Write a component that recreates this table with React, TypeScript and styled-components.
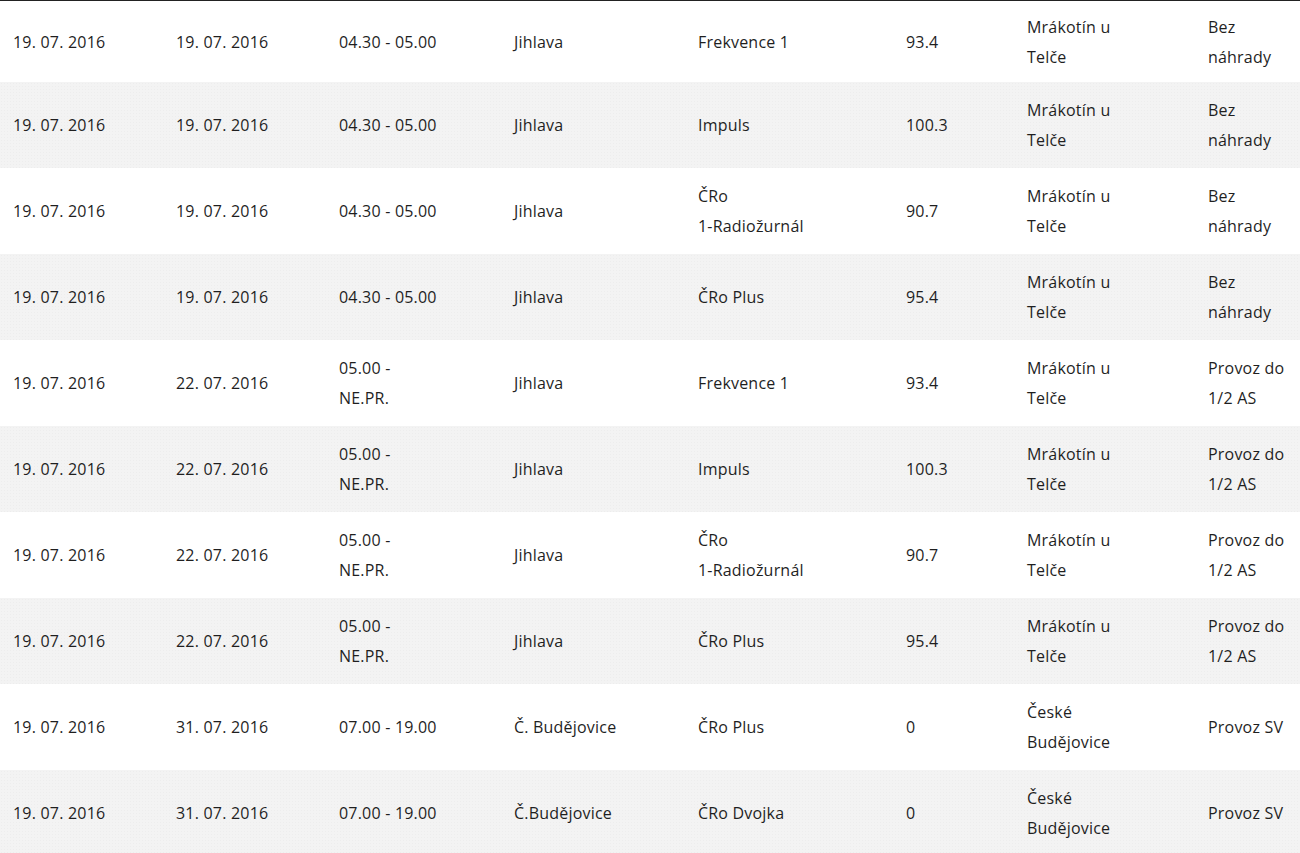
import styled, { createGlobalStyle } from 'styled-components'

const GlobalStyle = createGlobalStyle`
  html, body {
    margin: 0;
    padding: 0;
    background: #fff;
  }
  body {
    font-family: "Open Sans", "Liberation Sans", sans-serif;
    color: #1f1f1f;
    overflow: hidden;
  }
`

type Column = { width: number; text: number }

const columns: Column[] = [
  { width: 163, text: 140 },
  { width: 163, text: 140 },
  { width: 175, text: 101 },
  { width: 184, text: 160 },
  { width: 208, text: 135 },
  { width: 121, text: 100 },
  { width: 181, text: 112 },
  { width: 105, text: 90 }
]

const rows: string[][] = [
  ['19. 07. 2016', '19. 07. 2016', '04.30 - 05.00', 'Jihlava', 'Frekvence 1', '93.4', 'Mrákotín u Telče', 'Bez náhrady'],
  ['19. 07. 2016', '19. 07. 2016', '04.30 - 05.00', 'Jihlava', 'Impuls', '100.3', 'Mrákotín u Telče', 'Bez náhrady'],
  ['19. 07. 2016', '19. 07. 2016', '04.30 - 05.00', 'Jihlava', 'ČRo 1-Radiožurnál', '90.7', 'Mrákotín u Telče', 'Bez náhrady'],
  ['19. 07. 2016', '19. 07. 2016', '04.30 - 05.00', 'Jihlava', 'ČRo Plus', '95.4', 'Mrákotín u Telče', 'Bez náhrady'],
  ['19. 07. 2016', '22. 07. 2016', '05.00 - NE.PR.', 'Jihlava', 'Frekvence 1', '93.4', 'Mrákotín u Telče', 'Provoz do 1/2 AS'],
  ['19. 07. 2016', '22. 07. 2016', '05.00 - NE.PR.', 'Jihlava', 'Impuls', '100.3', 'Mrákotín u Telče', 'Provoz do 1/2 AS'],
  ['19. 07. 2016', '22. 07. 2016', '05.00 - NE.PR.', 'Jihlava', 'ČRo 1-Radiožurnál', '90.7', 'Mrákotín u Telče', 'Provoz do 1/2 AS'],
  ['19. 07. 2016', '22. 07. 2016', '05.00 - NE.PR.', 'Jihlava', 'ČRo Plus', '95.4', 'Mrákotín u Telče', 'Provoz do 1/2 AS'],
  ['19. 07. 2016', '31. 07. 2016', '07.00 - 19.00', 'Č. Budějovice', 'ČRo Plus', '0', 'České Budějovice', 'Provoz SV'],
  ['19. 07. 2016', '31. 07. 2016', '07.00 - 19.00', 'Č.Budějovice', 'ČRo Dvojka', '0', 'České Budějovice', 'Provoz SV']
]

// words only break at spaces, never at the hyphen in "1-Radiožurnál"
function Words ({ value }: { value: string }) {
  const parts = value.split(' ')
  return (
    <>
      {parts.map((w, i) => (
        <span key={i}>
          <Word>{w}</Word>
          {i < parts.length - 1 ? ' ' : null}
        </span>
      ))}
    </>
  )
}

export default function App () {
  return (
    <>
      <GlobalStyle />
      <Table>
        <colgroup>
          {columns.map((c, i) => (
            <col key={i} style={{ width: c.width }} />
          ))}
        </colgroup>
        <tbody>
          {rows.map((row, r) => (
            <Row key={r} $striped={r % 2 === 1}>
              {row.map((value, c) => (
                <Cell key={c}>
                  <CellText $max={columns[c].text}>
                    <Words value={value} />
                  </CellText>
                </Cell>
              ))}
            </Row>
          ))}
        </tbody>
      </Table>
    </>
  )
}

const Table = styled.table`
  width: 1300px;
  table-layout: fixed;
  border-collapse: collapse;
  border-top: 1px solid #222;
  box-shadow: inset 0 1px 0 #9a9a9a;
  font-size: 16px;
  letter-spacing: 0.2px;
  line-height: 30px;
`

const Row = styled.tr<{ $striped: boolean }>`
  background-color: ${(p) => (p.$striped ? '#f3f3f3' : '#fff')};
  background-image: ${(p) =>
    p.$striped ? 'radial-gradient(circle, rgba(0, 0, 0, 0.025) 0.8px, transparent 1px)' : 'none'};
  background-size: 3px 3px;

  &:first-child td {
    padding-top: 11px;
    padding-bottom: 10px;
  }
`

const Cell = styled.td`
  padding: 13px 0 13px 13px;
  vertical-align: middle;
  text-align: left;
`

const CellText = styled.div<{ $max: number }>`
  max-width: ${(p) => p.$max}px;
`

const Word = styled.span`
  white-space: nowrap;
`
